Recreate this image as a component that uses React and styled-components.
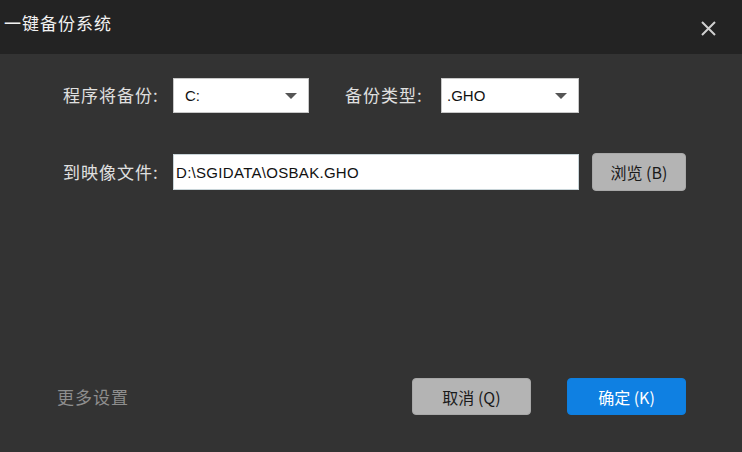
import React from "react";
import styled, { createGlobalStyle } from "styled-components";

const Global = createGlobalStyle`
  html, body { margin: 0; padding: 0; background: #333333; }
  body { font-family: "Noto Sans CJK SC", "Liberation Sans", sans-serif; }
`;

const Dialog = styled.div`
  width: 742px;
  height: 452px;
  background: #333333;
  display: flex;
  flex-direction: column;
  overflow: hidden;
`;

const TitleBar = styled.div`
  height: 54px;
  background: #232323;
  display: flex;
  align-items: center;
  justify-content: space-between;
  padding: 0 26px 0 4px;
  box-sizing: border-box;
  flex-shrink: 0;
`;

const Title = styled.div`
  color: #f2f2f2;
  font-size: 17px;
  letter-spacing: 1px;
  margin-top: -10px;
`;

const Close = styled.button`
  width: 15px;
  height: 15px;
  padding: 0;
  border: 0;
  background: none;
  display: flex;
  margin-top: 2px;
`;

const Body = styled.div`
  flex: 1;
  display: flex;
  flex-direction: column;
  padding: 24px 56px 37px 63px;
  box-sizing: border-box;
`;

const Row = styled.div`
  display: flex;
  align-items: center;
  height: ${(p) => p.h || 35}px;
  margin-bottom: ${(p) => p.mb || 0}px;
`;

const Label = styled.span`
  color: #e0e0e0;
  font-size: 17px;
  letter-spacing: 1px;
  width: ${(p) => p.w}px;
  margin-left: ${(p) => p.ml || 0}px;
  margin-top: -2px;
  white-space: nowrap;
`;

const Select = styled.div`
  width: ${(p) => p.w}px;
  height: 35px;
  background: #ffffff;
  border: 1px solid #c8c8c8;
  box-sizing: border-box;
  display: flex;
  align-items: center;
  justify-content: space-between;
  padding: 0 11px 0 ${(p) => p.pl || 11}px;
  font-family: "Liberation Sans", sans-serif;
  font-size: 15px;
  color: #111;
`;

const Arrow = styled.span`
  width: 0;
  height: 0;
  border-left: 6px solid transparent;
  border-right: 6px solid transparent;
  border-top: 6px solid #555;
`;

const Input = styled.div`
  width: 406px;
  height: 36px;
  background: #ffffff;
  border: 1px solid #c8d4d8;
  box-sizing: border-box;
  display: flex;
  align-items: center;
  padding-left: 2px;
  font-family: "Liberation Sans", sans-serif;
  font-size: 15px;
  letter-spacing: 0.3px;
  color: #111;
`;

const Button = styled.button`
  width: ${(p) => p.w}px;
  height: ${(p) => p.h || 37}px;
  margin-left: ${(p) => p.ml || 0}px;
  border-radius: 4px;
  border: 1px solid ${(p) => (p.primary ? "#0d7fe0" : "#a8a8a8")};
  background: ${(p) => (p.primary ? "#0f80e2" : "#b4b4b4")};
  color: ${(p) => (p.primary ? "#ffffff" : "#1a1a1a")};
  font-family: "Noto Sans CJK SC", sans-serif;
  font-size: 16px;
  padding: 0;
  display: flex;
  align-items: center;
  justify-content: center;
`;

const Spacer = styled.div`
  flex: 1;
`;

const Footer = styled.div`
  display: flex;
  align-items: center;
  margin-left: -6px;
`;

const More = styled.span`
  color: #8e8e8e;
  font-size: 17px;
  letter-spacing: 1px;
  flex: 1;
`;

export default function App() {
  return (
    <>
      <Global />
      <Dialog>
        <TitleBar>
          <Title>一键备份系统</Title>
          <Close aria-label="close">
            <svg width="15" height="15" viewBox="0 0 15 15">
              <path d="M1 1 L14 14 M14 1 L1 14" stroke="#d0d0d0" strokeWidth="2" />
            </svg>
          </Close>
        </TitleBar>
        <Body>
          <Row mb={40}>
            <Label w={110}>程序将备份:</Label>
            <Select w={136}>
              <span>C:</span>
              <Arrow />
            </Select>
            <Label w={96} ml={36}>备份类型:</Label>
            <Select w={138} pl={5}>
              <span>.GHO</span>
              <Arrow />
            </Select>
          </Row>
          <Row h={38}>
            <Label w={110}>到映像文件:</Label>
            <Input>D:\SGIDATA\OSBAK.GHO</Input>
            <Button w={94} h={38} ml={13}>浏览 (B)</Button>
          </Row>
          <Spacer />
          <Footer>
            <More>更多设置</More>
            <Button w={119}>取消 (Q)</Button>
            <Button w={119} ml={36} primary>确定 (K)</Button>
          </Footer>
        </Body>
      </Dialog>
    </>
  );
}
